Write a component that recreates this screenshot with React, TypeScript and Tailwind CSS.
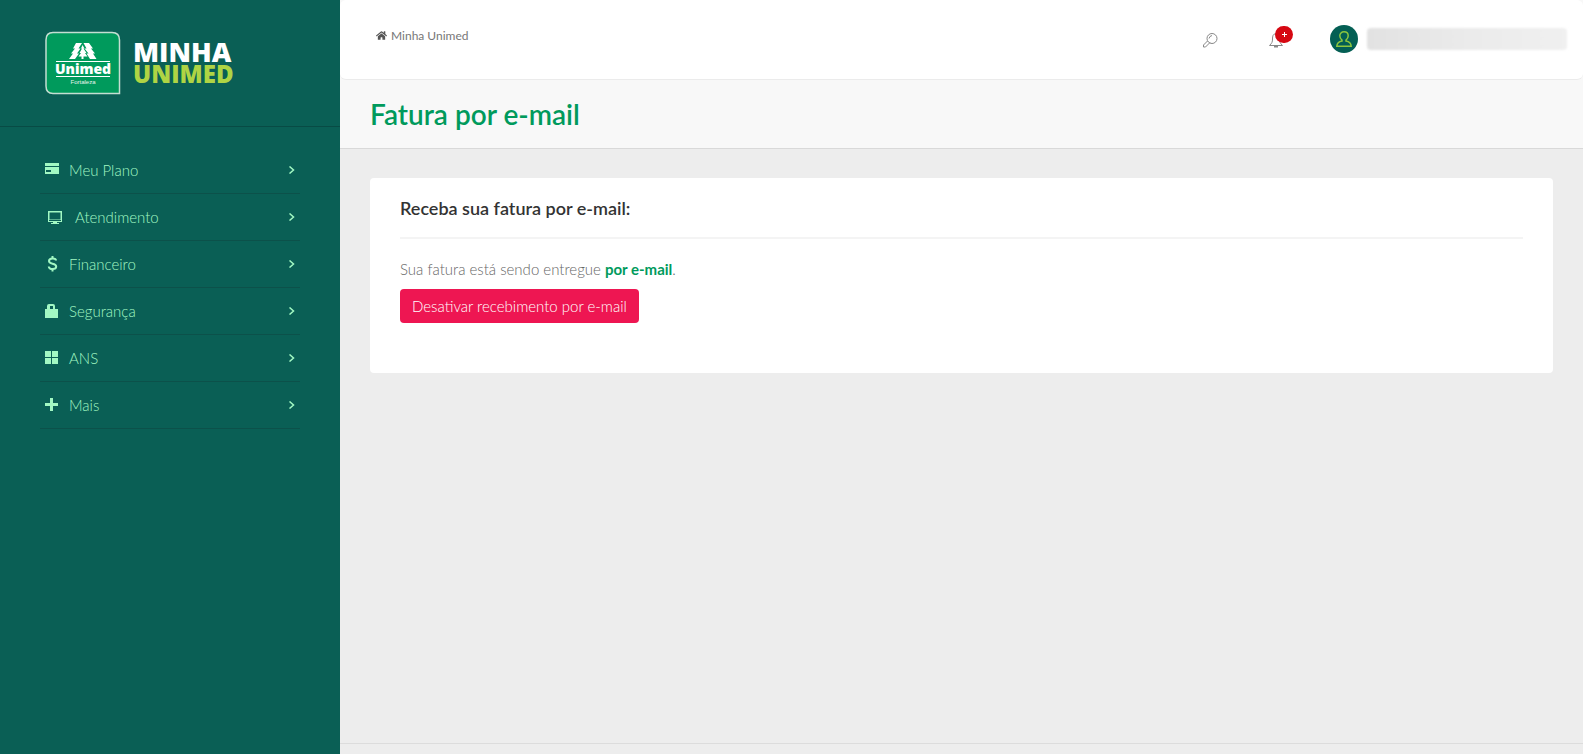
import type { ReactNode } from 'react';
import { FaHome } from 'react-icons/fa';

type MenuItem = {
  label: string;
  icon: ReactNode;
  labelClass?: string;
};

const menuItems: MenuItem[] = [
  {
    label: 'Meu Plano',
    icon: (
      <svg width="14" height="16" viewBox="0 0 14 16" fill="currentColor" shapeRendering="crispEdges">
        <path d="M0 1h14v3H0zM0 5h14v7H0zM1 8v2h5V8z" fillRule="evenodd" />
      </svg>
    ),
  },
  {
    label: 'Atendimento',
    labelClass: 'pl-[6px]',
    icon: (
      <svg width="18" height="16" viewBox="0 0 18 16" fill="currentColor">
        <path d="M3 2h14v11H3zM4.500 3.500v7h11v-7z" fillRule="evenodd" />
        <path d="M4 11h12v1H4z" fill="#0a5f55" />
        <path d="M8 13h4v1H8zM6 14h8v1H6z" />
      </svg>
    ),
  },
  {
    label: 'Financeiro',
    icon: (
      <svg width="14" height="16" viewBox="0 0 14 16" fill="none" stroke="currentColor" strokeWidth="2">
        <path d="M11 4.500C11 3 9.500 2.500 7.500 2.500S4 3.200 4 5s1.600 2.300 3.500 2.700S11.200 8.800 11.200 10.500 9.800 13 7.500 13 3.800 12 3.800 10.500" />
        <path d="M7.500 0v3M7.500 12.500v3" />
      </svg>
    ),
  },
  {
    label: 'Segurança',
    icon: (
      <svg width="14" height="16" viewBox="0 0 14 16" fill="currentColor">
        <path d="M0 6h2V3Q2 1 4 1h4Q10 1 10 3v3h3v9H0zM5 3v3h3V3z" fillRule="evenodd" />
      </svg>
    ),
  },
  {
    label: 'ANS',
    icon: (
      <svg width="14" height="16" viewBox="0 0 14 16" fill="currentColor" shapeRendering="crispEdges">
        <path d="M0 1h6v6H0zM7 1h6v6H7zM0 8h6v6H0zM7 8h6v6H7z" />
      </svg>
    ),
  },
  {
    label: 'Mais',
    icon: (
      <svg width="14" height="16" viewBox="0 0 14 16" fill="currentColor" shapeRendering="crispEdges">
        <path d="M5 1h3v5h5v3H8v5H5V9H0V6h5z" />
      </svg>
    ),
  },
];

function Logo() {
  return (
    <a href="#" className="flex items-center gap-3">
      <svg width="76" height="64" viewBox="0 0 76 64">
        <path
          d="M8 1.500H67Q74.500 1.500 74.500 9V62.500H8Q1 62.500 1 55V9Q1 1.500 8 1.500Z"
          fill="#009a5c"
          stroke="#c4ded2"
          strokeWidth="1.500"
        />
        {/* pine trees */}
        <path d="M31 12h6l-3.500 5.500h2L32 22.500h2L30 28h-6l4-5.500h-2l4-5h-2z" fill="#fff" />
        <path d="M38.500 12H44l4 5.500h-2l4 5h-2l3.500 5.500H45l-3.500-5.500h2l-4-5h2z" fill="#fff" />
        <path d="M37.500 14l2 3.500h-1l3 4.500h-1.500l2.500 3.500h-4V28h-2v-2.500h-3l2.500-3.500h-1.500l2.500-4.500h-1z" fill="#fff" />
        <path d="M11 30.500h54M11 45.500h54" stroke="#fff" strokeWidth="1" />
        <text
          x="38"
          y="43"
          textAnchor="middle"
          fill="#fff"
          fontFamily="Open Sans, sans-serif"
          fontWeight="800"
          fontSize="14"
        >
          Unimed
        </text>
        <text
          x="38"
          y="53"
          textAnchor="middle"
          fill="#e6f5ee"
          fontFamily="Liberation Sans, sans-serif"
          fontSize="6"
        >
          Fortaleza
        </text>
      </svg>
      <span className="flex flex-col font-['Open_Sans',sans-serif] font-extrabold leading-[22px]">
        <span className="text-[27px] text-white">MINHA</span>
        <span className="text-[24px] text-[#afd444]">UNIMED</span>
      </span>
    </a>
  );
}

function Sidebar() {
  return (
    <aside className="w-[340px] shrink-0 bg-[#0a5f55]">
      <div className="flex h-[127px] items-center border-b border-[#084b45] px-[45px]">
        <Logo />
      </div>
      <nav className="px-10 pt-5">
        <ul>
          {menuItems.map((item) => (
            <li key={item.label} className="border-b border-[#0c514a]">
              <a
                href="#"
                className="flex h-[46px] items-center px-[5px] text-[15px] font-light text-[#a2f8c3]"
              >
                <span className="flex w-6 shrink-0 pb-px">{item.icon}</span>
                <span className={item.labelClass}>{item.label}</span>
                <svg
                  className="ml-auto"
                  width="7"
                  height="8"
                  viewBox="0 0 7 8"
                  fill="none"
                  stroke="currentColor"
                  strokeWidth="1.500"
                >
                  <path d="M1.500 .5 5.500 4 1.500 7.500" />
                </svg>
              </a>
            </li>
          ))}
        </ul>
      </nav>
    </aside>
  );
}

function Header() {
  return (
    <header className="bg-[#f8f8f8]">
      <div className="flex h-20 items-center justify-between rounded-md border-b border-[#ebebeb] bg-white pl-9 pr-4">
        <a href="#" className="flex items-center gap-1 pb-2 text-[12px] text-[#777]">
          <FaHome size={11} className="text-[#555]" />
          Minha Unimed
        </a>
        <div className="flex items-center">
          <button type="button" aria-label="Buscar" className="mr-[51px] text-[#888]">
            <svg width="16" height="16" viewBox="0 0 16 16" fill="none" stroke="currentColor">
              <circle cx="10" cy="6.500" r="5" />
              <path d="M5.500 9 1.500 13v2h2l4.500-4.500M7 6.500Q7.500 4 10 3.500" />
            </svg>
          </button>
          <button type="button" aria-label="Notificações" className="relative mr-[46px] text-[#888]">
            <svg width="15" height="16" viewBox="0 0 15 16" fill="none" stroke="currentColor">
              <path d="M7 1.500C4 2 3.500 4 3.500 7c0 3-.5 4-3 6.500h13c-2.500-2.500-3-3.500-3-6.500 0-3-.5-5-3.500-5.500z" />
              <path d="M5 14.500h4" strokeWidth="2" />
            </svg>
            <span className="absolute -top-[6px] left-[6px] flex h-[17px] w-[18px] items-center justify-center rounded-full bg-[#d60812] text-white">
              <svg width="5" height="5" viewBox="0 0 5 5" shapeRendering="crispEdges" fill="currentColor">
                <path d="M2 0h1v2h2v1H3v2H2V3H0V2h2z" />
              </svg>
            </span>
          </button>
          <button type="button" aria-label="Minha conta" className="flex items-center gap-[9px] pb-[2px]">
            <span className="flex h-7 w-7 items-center justify-center rounded-full bg-[#045f54]">
              <svg width="16" height="16" viewBox="0 0 16 16" fill="none" stroke="#8dc63f" strokeWidth="1.500">
                <path d="M6 9.200C4.500 8 3.800 6 3.800 4.800 3.800 2.500 5.500.8 8 .8s4.200 1.700 4.200 4c0 1.200-.7 3.200-2.200 4.400v.8c3 .5 5 2.200 5.200 5.200H.8C1 12.200 3 10.500 6 10z" />
              </svg>
            </span>
            <span className="h-[22px] w-[200px] rounded-sm bg-linear-to-r from-[#e2e2e2] via-[#ebebeb] to-[#f0f0f0] blur-[1px]" />
          </button>
        </div>
      </div>
      <div className="flex h-[69px] items-center border-b border-[#d9d9d9] px-[30px] pb-px">
        <h1 className="text-[28px] font-semibold text-[#009a5c]">Fatura por e-mail</h1>
      </div>
    </header>
  );
}

export default function App() {
  return (
    <div className="flex min-h-screen bg-[#ededed] font-[Lato,sans-serif]">
      <Sidebar />
      <div className="flex min-w-0 flex-1 flex-col">
        <Header />
        <main className="flex-1 px-[30px] pt-[29px]">
          <section className="rounded-[4px] bg-white px-[30px] pb-[50px] pt-4">
            <h2 className="border-b-2 border-[#f4f4f4] pb-[15px] text-lg leading-7 font-semibold text-[#333]">
              Receba sua fatura por e-mail:
            </h2>
            <p className="pt-5 text-[15px] leading-5 font-light text-[#666]">
              Sua fatura está sendo entregue{' '}
              <strong className="font-bold text-[#009a5c]">por e-mail</strong>.
            </p>
            <button
              type="button"
              className="mt-[10px] h-[34px] rounded-[4px] bg-[#ee1652] px-3 text-[15px] font-light text-white"
            >
              Desativar recebimento por e-mail
            </button>
          </section>
        </main>
        <footer className="h-[11px] border-t border-[#dcdcdc]" />
      </div>
    </div>
  );
}
